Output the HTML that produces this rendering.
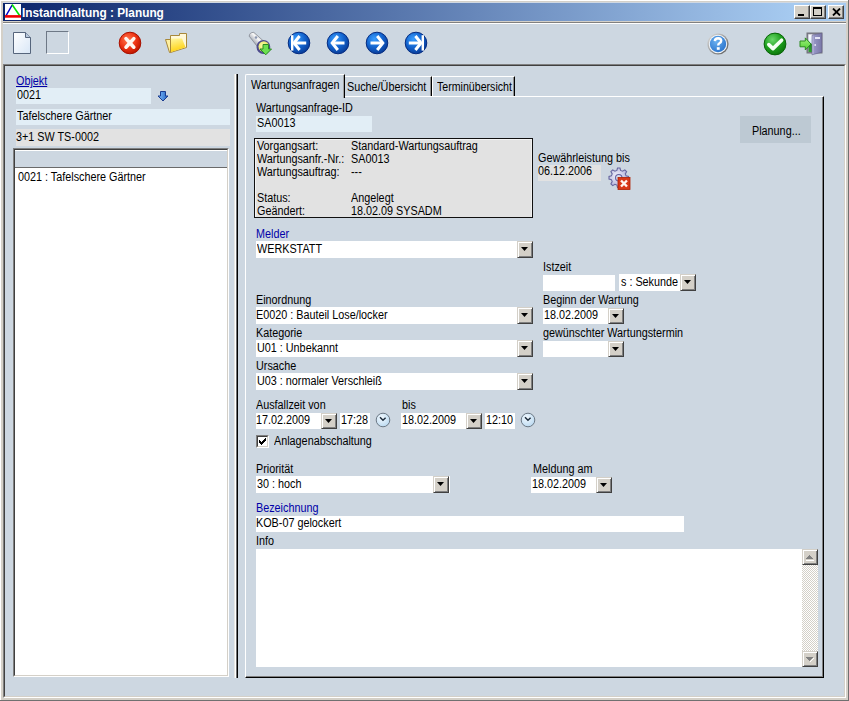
<!DOCTYPE html>
<html><head><meta charset="utf-8">
<style>
*{margin:0;padding:0;box-sizing:border-box}
html,body{width:849px;height:701px;overflow:hidden;background:#D4D0C8}
body{position:relative;font-family:"Liberation Sans",sans-serif;font-size:11px;color:#000}
.a{position:absolute}
.t{position:absolute;white-space:pre;line-height:13px;font-size:12px;transform:scaleX(0.9);transform-origin:0 0}
.bl{color:#0000A8}
.fb{position:absolute;background:#E2EEF6}
.fg{position:absolute;background:#E2E2E2}
.fw{position:absolute;background:#FFFFFF}
.dd{position:absolute;width:16px;background:#D4D0C8;border-top:1px solid #D4D0C8;border-left:1px solid #D4D0C8;border-right:1px solid #404040;border-bottom:1px solid #404040;box-shadow:inset 1px 1px 0 #FFF,inset -1px -1px 0 #808080}
.dd:after{content:"";position:absolute;left:3px;top:5px;width:7px;height:4px;background:#000;clip-path:polygon(0 0,100% 0,50% 100%)}
.bg{background:#CDD7E1}
</style></head><body>
<!-- window frame -->
<div class="a" style="left:0;top:0;width:849px;height:1px;background:#FFF"></div>
<div class="a" style="left:0;top:0;width:1px;height:701px;background:#FFF"></div>
<div class="a" style="left:3px;top:2px;width:843px;height:1px;background:#D0D8E2"></div>
<div class="a" style="left:848px;top:0;width:1px;height:701px;background:#707070"></div>
<div class="a" style="left:0;top:700px;width:849px;height:1px;background:#707070"></div>
<!-- title bar -->
<div class="a" style="left:3px;top:3px;width:843px;height:18px;background:linear-gradient(to right,#0A246A 0px,#A6CAF0 790px)"></div>
<svg class="a" style="left:5px;top:4px" width="16" height="16" viewBox="0 0 16 16">
<rect x="0" y="0" width="16" height="16" fill="#fff"/>
<path d="M0.3 13 L7.2 1" stroke="#0000C8" stroke-width="1.5"/>
<path d="M7 0.5 L14.6 11.5" stroke="#00E000" stroke-width="1.6"/>
<path d="M0 12.4 H16" stroke="#F00000" stroke-width="2.6"/>
</svg>
<div class="t" style="left:22px;top:7px;color:#fff;font-weight:bold;font-size:12px;transform:scaleX(0.985)">Instandhaltung : Planung</div>
<!-- caption buttons -->
<div class="a" style="left:794px;top:5px;width:16px;height:14px;background:#D4D0C8;border-top:1px solid #FFF;border-left:1px solid #FFF;border-right:1px solid #404040;border-bottom:1px solid #404040;box-shadow:inset -1px -1px 0 #808080"><div class="a" style="left:3px;top:8px;width:6px;height:2px;background:#000"></div></div>
<div class="a" style="left:810px;top:5px;width:16px;height:14px;background:#D4D0C8;border-top:1px solid #FFF;border-left:1px solid #FFF;border-right:1px solid #404040;border-bottom:1px solid #404040;box-shadow:inset -1px -1px 0 #808080"><div class="a" style="left:2px;top:1px;width:9px;height:9px;border:1px solid #000;border-top-width:2px"></div></div>
<div class="a" style="left:828px;top:5px;width:16px;height:14px;background:#D4D0C8;border-top:1px solid #FFF;border-left:1px solid #FFF;border-right:1px solid #404040;border-bottom:1px solid #404040;box-shadow:inset -1px -1px 0 #808080">
<svg class="a" style="left:3px;top:2px" width="9" height="8" viewBox="0 0 9 8"><path d="M1 0.5 L8 7.5 M8 0.5 L1 7.5" stroke="#000" stroke-width="1.8"/></svg></div>
<!-- menu separator -->
<div class="a" style="left:3px;top:22px;width:843px;height:1px;background:#808080"></div>
<div class="a" style="left:3px;top:23px;width:843px;height:1px;background:#FFF"></div>
<!-- toolbar -->
<div class="a bg" style="left:3px;top:24px;width:843px;height:40px"></div>
<!-- client -->
<div class="a bg" style="left:3px;top:64px;width:843px;height:634px;border-top:1px solid #808080;border-left:1px solid #808080;border-right:1px solid #FFF;border-bottom:1px solid #FFF"></div>
<div class="a" style="left:4px;top:65px;width:841px;height:632px;border-top:1px solid #404040;border-left:1px solid #404040;border-right:1px solid #D4D0C8;border-bottom:1px solid #D4D0C8"></div>

<!-- LEFT PANEL -->
<div class="t bl" style="left:16px;top:75px;text-decoration:underline">Objekt</div>
<div class="fb" style="left:16px;top:88px;width:135px;height:16px"></div>
<div class="t" style="left:17px;top:89px">0021</div>
<div class="fb" style="left:16px;top:109px;width:214px;height:16px"></div>
<div class="t" style="left:17px;top:110px">Tafelschere Gärtner</div>
<div class="fg" style="left:16px;top:129px;width:214px;height:17px"></div>
<div class="t" style="left:16px;top:131px">3+1 SW TS-0002</div>
<div class="a" style="left:13px;top:148px;width:216px;height:529px;background:#fff;border-top:1px solid #808080;border-left:1px solid #808080;border-right:1px solid #FFF;border-bottom:1px solid #FFF"></div>
<div class="a" style="left:14px;top:149px;width:214px;height:527px;border-top:1px solid #404040;border-left:1px solid #404040;border-right:1px solid #D4D0C8;border-bottom:1px solid #D4D0C8"></div>
<div class="a bg" style="left:15px;top:150px;width:212px;height:18px;border-top:1px solid #FFF;border-bottom:1px solid #6A6A6A"></div>
<div class="t" style="left:18px;top:171px">0021 : Tafelschere Gärtner</div>

<!-- splitter -->
<div class="a" style="left:234px;top:74px;width:1px;height:604px;background:#E8E8E4"></div>
<div class="a" style="left:235px;top:74px;width:1px;height:604px;background:#FFF"></div>
<div class="a" style="left:236px;top:74px;width:1px;height:604px;background:#707070"></div>
<div class="a" style="left:237px;top:74px;width:1px;height:604px;background:#000"></div>
<!-- TABS -->
<div class="a" style="left:245px;top:96px;width:579px;height:582px;border-top:1px solid #FFF;border-left:1px solid #FFF;border-right:1px solid #000;border-bottom:1px solid #000"></div>
<div class="a" style="left:246px;top:97px;width:577px;height:580px;border-right:1px solid #808080;border-bottom:1px solid #808080"></div>
<!-- tab 2 -->
<div class="a bg" style="left:345px;top:76px;width:87px;height:20px;border-top:1px solid #FFF;border-right:1px solid #000;box-shadow:inset -1px 0 0 #909090"></div>
<div class="t" style="left:347px;top:81px">Suche/Übersicht</div>
<!-- tab 3 -->
<div class="a bg" style="left:432px;top:76px;width:83px;height:20px;border-top:1px solid #FFF;border-left:1px solid #FFF;border-right:1px solid #000;box-shadow:inset -1px 0 0 #909090"></div>
<div class="t" style="left:437px;top:81px;transform:scaleX(0.885)">Terminübersicht</div>
<!-- tab 1 selected -->
<div class="a bg" style="left:245px;top:74px;width:100px;height:24px;border-top:1px solid #FFF;border-left:1px solid #FFF;border-right:1px solid #000;border-top-left-radius:2px;box-shadow:inset -1px 0 0 #A0A0A0"></div>
<div class="t" style="left:251px;top:79px">Wartungsanfragen</div>

<!-- TAB CONTENT -->
<div class="t" style="left:256px;top:102px">Wartungsanfrage-ID</div>
<div class="fb" style="left:256px;top:116px;width:116px;height:16px"></div>
<div class="t" style="left:257px;top:117px">SA0013</div>

<div class="fg" style="left:254px;top:138px;width:279px;height:80px;border:1px solid #101010;box-shadow:inset 1px 1px 0 #F4F4F4,inset -1px 0 0 #F0F0F0"></div>
<div class="t" style="left:257px;top:140px;line-height:13px">Vorgangsart:
Wartungsanfr.-Nr.:
Wartungsauftrag:

Status:
Geändert:</div>
<div class="t" style="left:351px;top:140px;line-height:13px">Standard-Wartungsauftrag
SA0013
---

Angelegt
18.02.09 SYSADM</div>

<div class="a" style="left:740px;top:116px;width:71px;height:27px;background:#BDC9D3"></div>
<div class="t" style="left:752px;top:125px">Planung...</div>

<div class="t" style="left:538px;top:152px">Gewährleistung bis</div>
<div class="fg" style="left:538px;top:165px;width:63px;height:16px"></div>
<div class="t" style="left:538px;top:165px">06.12.2006</div>

<div class="t bl" style="left:256px;top:228px">Melder</div>
<div class="fw" style="left:256px;top:241px;width:277px;height:17px"></div>
<div class="t" style="left:257px;top:243px">WERKSTATT</div>
<div class="dd" style="left:517px;top:241px;height:17px"></div>

<div class="t" style="left:543px;top:261px">Istzeit</div>
<div class="fw" style="left:543px;top:275px;width:72px;height:16px"></div>
<div class="fw" style="left:619px;top:274px;width:77px;height:17px"></div>
<div class="t" style="left:621px;top:276px">s : Sekunde</div>
<div class="dd" style="left:680px;top:274px;height:17px"></div>

<div class="t" style="left:256px;top:294px">Einordnung</div>
<div class="fw" style="left:256px;top:307px;width:277px;height:17px"></div>
<div class="t" style="left:256px;top:309px">E0020 : Bauteil Lose/locker</div>
<div class="dd" style="left:517px;top:307px;height:17px"></div>

<div class="t" style="left:543px;top:294px">Beginn der Wartung</div>
<div class="fw" style="left:543px;top:308px;width:81px;height:16px"></div>
<div class="t" style="left:544px;top:309px">18.02.2009</div>
<div class="dd" style="left:608px;top:308px;height:16px"></div>

<div class="t" style="left:256px;top:327px">Kategorie</div>
<div class="fw" style="left:256px;top:340px;width:277px;height:17px"></div>
<div class="t" style="left:257px;top:342px">U01 : Unbekannt</div>
<div class="dd" style="left:517px;top:340px;height:17px"></div>

<div class="t" style="left:543px;top:327px">gewünschter Wartungstermin</div>
<div class="fw" style="left:543px;top:341px;width:81px;height:16px"></div>
<div class="dd" style="left:608px;top:341px;height:16px"></div>

<div class="t" style="left:256px;top:360px">Ursache</div>
<div class="fw" style="left:256px;top:373px;width:277px;height:17px"></div>
<div class="t" style="left:257px;top:375px">U03 : normaler Verschleiß</div>
<div class="dd" style="left:517px;top:373px;height:17px"></div>

<div class="t" style="left:256px;top:399px">Ausfallzeit von</div>
<div class="fw" style="left:256px;top:413px;width:81px;height:16px"></div>
<div class="t" style="left:256px;top:414px">17.02.2009</div>
<div class="dd" style="left:321px;top:413px;height:16px"></div>
<div class="fw" style="left:340px;top:413px;width:30px;height:16px"></div>
<div class="t" style="left:341px;top:414px">17:28</div>

<div class="t" style="left:402px;top:399px">bis</div>
<div class="fw" style="left:401px;top:413px;width:81px;height:16px"></div>
<div class="t" style="left:402px;top:414px">18.02.2009</div>
<div class="dd" style="left:466px;top:413px;height:16px"></div>
<div class="fw" style="left:485px;top:413px;width:30px;height:16px"></div>
<div class="t" style="left:486px;top:414px">12:10</div>

<div class="a" style="left:256px;top:435px;width:13px;height:13px;background:#fff;border-top:1px solid #808080;border-left:1px solid #808080;border-right:1px solid #fff;border-bottom:1px solid #fff"></div>
<div class="a" style="left:257px;top:436px;width:11px;height:11px;border-top:1px solid #404040;border-left:1px solid #404040;border-right:1px solid #D4D0C8;border-bottom:1px solid #D4D0C8"></div>
<svg class="a" style="left:259px;top:438px" width="7" height="7" viewBox="0 0 7 7" shape-rendering="crispEdges"><path d="M6 0h1v1h-1zM5 1h2v1h-2zM0 2h1v1h-1zM4 2h3v1h-3zM0 3h2v1h-2zM3 3h3v1h-3zM0 4h5v1h-5zM1 5h3v1h-3zM2 6h1v1h-1z" fill="#000"/></svg>
<div class="t" style="left:274px;top:435px">Anlagenabschaltung</div>

<div class="t" style="left:256px;top:463px">Priorität</div>
<div class="fw" style="left:256px;top:476px;width:194px;height:17px"></div>
<div class="t" style="left:257px;top:478px">30 : hoch</div>
<div class="dd" style="left:433px;top:476px;height:17px"></div>

<div class="t" style="left:533px;top:463px">Meldung am</div>
<div class="fw" style="left:531px;top:477px;width:81px;height:16px"></div>
<div class="t" style="left:532px;top:478px">18.02.2009</div>
<div class="dd" style="left:596px;top:477px;height:16px"></div>

<div class="t bl" style="left:256px;top:502px">Bezeichnung</div>
<div class="fw" style="left:256px;top:516px;width:428px;height:16px"></div>
<div class="t" style="left:256px;top:517px">KOB-07 gelockert</div>

<div class="t" style="left:256px;top:535px">Info</div>
<div class="fw" style="left:256px;top:549px;width:562px;height:118px"></div>
<!-- scrollbar -->
<div class="a" style="left:802px;top:565px;width:16px;height:86px;background-color:#fff;background-image:repeating-conic-gradient(#D4D0C8 0 25%,#fff 0 50%);background-size:2px 2px"></div>
<div class="a" style="left:802px;top:549px;width:16px;height:16px;background:#D4D0C8;border-top:1px solid #D4D0C8;border-left:1px solid #D4D0C8;border-right:1px solid #404040;border-bottom:1px solid #404040;box-shadow:inset 1px 1px 0 #FFF,inset -1px -1px 0 #808080"></div>
<div class="a" style="left:802px;top:651px;width:16px;height:16px;background:#D4D0C8;border-top:1px solid #D4D0C8;border-left:1px solid #D4D0C8;border-right:1px solid #404040;border-bottom:1px solid #404040;box-shadow:inset 1px 1px 0 #FFF,inset -1px -1px 0 #808080"></div>

<!-- TOOLBAR ICONS -->
<svg class="a" style="left:12px;top:31px" width="20" height="24" viewBox="0 0 20 24">
<defs><linearGradient id="gdoc" x1="0" y1="0" x2="1" y2="1"><stop offset="0" stop-color="#FFFFFF"/><stop offset="1" stop-color="#D8E6F6"/></linearGradient></defs>
<path d="M1.5 1.5 H13.5 L18.5 6.5 V22.5 H1.5 Z" fill="url(#gdoc)" stroke="#56657C" stroke-width="1"/>
<path d="M13.5 1.5 V6.5 H18.5" fill="#B8C8DC" stroke="#56657C" stroke-width="1"/>
</svg>
<div class="a" style="left:46px;top:31px;width:23px;height:23px;border-top:1px solid #6E7886;border-left:1px solid #6E7886;border-right:1px solid #FFF;border-bottom:1px solid #FFF"></div>

<svg class="a" style="left:118px;top:31px" width="24" height="24" viewBox="0 0 24 24">
<defs><radialGradient id="gred" cx="0.4" cy="0.35" r="0.65"><stop offset="0" stop-color="#FF7A50"/><stop offset="0.6" stop-color="#EE3414"/><stop offset="1" stop-color="#C01800"/></radialGradient></defs>
<circle cx="12" cy="12" r="10.8" fill="url(#gred)" stroke="#A81000" stroke-width="1"/>
<path d="M8 16.2 L15.8 7.6 M8 7.6 L15.8 16.2" stroke="#FFF6F0" stroke-width="3.6" stroke-linecap="round"/>
</svg>

<svg class="a" style="left:163px;top:31px" width="26" height="24" viewBox="0 0 26 24">
<defs><linearGradient id="gfold" x1="0" y1="0" x2="0.3" y2="1"><stop offset="0" stop-color="#FFF6A0"/><stop offset="1" stop-color="#FFD210"/></linearGradient></defs>
<path d="M7.5 4.5 H16.5 V2.5 H23.5 V16.5 L7.5 21.5 Z" fill="#FFF8D8" stroke="#A8883A" stroke-width="1"/>
<path d="M8 7.5 H19 L22.5 16.2 L8 21 Z" fill="url(#gfold)"/>
<path d="M2.5 8.5 H7.5 V21.5 H6.5 Z" fill="#FFF0A0" stroke="#A8883A" stroke-width="1" stroke-linejoin="round"/>
</svg>

<svg class="a" style="left:248px;top:31px" width="26" height="26" viewBox="0 0 26 26">
<defs><linearGradient id="gflash" x1="0.15" y1="0.85" x2="0.85" y2="0.15"><stop offset="0" stop-color="#5C6068"/><stop offset="0.35" stop-color="#B8BCC4"/><stop offset="0.6" stop-color="#F8F8F8"/><stop offset="1" stop-color="#9EA2AA"/></linearGradient>
<radialGradient id="glens" cx="0.4" cy="0.4" r="0.7"><stop offset="0" stop-color="#FFFFA8"/><stop offset="1" stop-color="#D8D850"/></radialGradient></defs>
<path d="M1.2 5.2 Q1.5 1.2 5.8 1.4 L18.6 12.8 L12.4 19.4 Z" fill="url(#gflash)" stroke="#7A7E88" stroke-width="0.7"/>
<circle cx="8" cy="6.5" r="1.3" fill="#8A96B0"/>
<circle cx="15.4" cy="16" r="6.9" fill="#4C4A8C"/>
<circle cx="15.8" cy="15.6" r="5.3" fill="url(#glens)"/>
<path d="M15 13.5 H20.5 V18 H23.5 L17.75 23.8 L12 18 H15 Z" fill="#6CE050" stroke="#2A8A22" stroke-width="1"/>
</svg>

<svg class="a" style="left:287px;top:31px" width="24" height="24" viewBox="0 0 24 24">
<defs><radialGradient id="gblue" cx="0.38" cy="0.32" r="0.72"><stop offset="0" stop-color="#3A9EFF"/><stop offset="0.55" stop-color="#1262CC"/><stop offset="1" stop-color="#083A96"/></radialGradient></defs>
<circle cx="12" cy="12" r="10.8" fill="url(#gblue)" stroke="#062C80" stroke-width="1"/>
<path d="M5.2 4.2 V19.6" stroke="#fff" stroke-width="2.4"/>
<path d="M8 12 H19.2" stroke="#fff" stroke-width="3"/>
<path d="M12.6 5 L7 12 L12.6 19" fill="none" stroke="#fff" stroke-width="3"/>
</svg>
<svg class="a" style="left:326px;top:31px" width="24" height="24" viewBox="0 0 24 24">
<circle cx="12" cy="12" r="10.8" fill="url(#gblue)" stroke="#062C80" stroke-width="1"/>
<path d="M7 12 H18.5" stroke="#fff" stroke-width="3"/>
<path d="M11.8 5 L6.2 12 L11.8 19" fill="none" stroke="#fff" stroke-width="3"/>
</svg>
<svg class="a" style="left:365px;top:31px" width="24" height="24" viewBox="0 0 24 24">
<circle cx="12" cy="12" r="10.8" fill="url(#gblue)" stroke="#062C80" stroke-width="1"/>
<path d="M5.5 12 H17" stroke="#fff" stroke-width="3"/>
<path d="M12.2 5 L17.8 12 L12.2 19" fill="none" stroke="#fff" stroke-width="3"/>
</svg>
<svg class="a" style="left:404px;top:31px" width="24" height="24" viewBox="0 0 24 24">
<circle cx="12" cy="12" r="10.8" fill="url(#gblue)" stroke="#062C80" stroke-width="1"/>
<path d="M18.8 4.2 V19.6" stroke="#fff" stroke-width="2.4"/>
<path d="M4.8 12 H16" stroke="#fff" stroke-width="3"/>
<path d="M11.4 5 L17 12 L11.4 19" fill="none" stroke="#fff" stroke-width="3"/>
</svg>

<svg class="a" style="left:706px;top:32px" width="24" height="24" viewBox="0 0 24 24">
<defs><linearGradient id="gring" x1="0" y1="0" x2="1" y2="1"><stop offset="0" stop-color="#E4E4E4"/><stop offset="1" stop-color="#545454"/></linearGradient>
<radialGradient id="ghelp" cx="0.4" cy="0.35" r="0.7"><stop offset="0" stop-color="#6AB0F0"/><stop offset="1" stop-color="#2A74CC"/></radialGradient></defs>
<circle cx="12" cy="12" r="10.6" fill="url(#gring)"/>
<circle cx="12" cy="12" r="9.2" fill="#F4F8FC"/>
<circle cx="12" cy="12" r="8.2" fill="url(#ghelp)"/>
<path d="M8.8 9.2 Q9 6.2 12.2 6.2 Q15.2 6.3 15.2 8.8 Q15.2 10.4 13.4 11.3 Q12.2 11.9 12.2 13.6" fill="none" stroke="#fff" stroke-width="2.4"/>
<rect x="10.8" y="15.2" width="2.9" height="2.6" fill="#fff"/>
</svg>

<svg class="a" style="left:763px;top:32px" width="24" height="24" viewBox="0 0 24 24">
<defs><radialGradient id="ggreen" cx="0.38" cy="0.3" r="0.75"><stop offset="0" stop-color="#6AD86A"/><stop offset="0.55" stop-color="#1EA01E"/><stop offset="1" stop-color="#0A740A"/></radialGradient></defs>
<circle cx="12" cy="12" r="10.9" fill="url(#ggreen)" stroke="#086408" stroke-width="1"/>
<path d="M5.8 12.6 L10 16.6 L18.6 8.2" fill="none" stroke="#F4FFF4" stroke-width="3.6" stroke-linejoin="round" stroke-linecap="round"/>
</svg>

<svg class="a" style="left:796px;top:29px" width="30" height="29" viewBox="0 0 30 29">
<defs><linearGradient id="gdoor" x1="0" y1="0" x2="1" y2="0"><stop offset="0" stop-color="#C8C8E8"/><stop offset="0.25" stop-color="#9494C4"/><stop offset="1" stop-color="#7A78A8"/></linearGradient>
<linearGradient id="gopen" x1="0" y1="0" x2="0" y2="1"><stop offset="0" stop-color="#FFFFFF"/><stop offset="0.5" stop-color="#D8ECFF"/><stop offset="0.55" stop-color="#208A20"/><stop offset="1" stop-color="#30A030"/></linearGradient>
<linearGradient id="garr" x1="0" y1="0" x2="0" y2="1"><stop offset="0" stop-color="#A0F080"/><stop offset="1" stop-color="#50D030"/></linearGradient></defs>
<rect x="11.2" y="4.2" width="14.6" height="19.6" fill="#A8A8B8" stroke="#74747E" stroke-width="1.4"/>
<rect x="12.5" y="5.5" width="4" height="17.5" fill="url(#gopen)"/>
<path d="M16 6.2 L25.8 4.2 V23.2 L16 25.8 Z" fill="url(#gdoor)" stroke="#64628E" stroke-width="0.6"/>
<rect x="19" y="8" width="5" height="2" fill="#E4E4F6"/>
<circle cx="19.2" cy="16" r="0.9" fill="#E8E8F8"/>
<path d="M4 12 H9.3 V8.9 L15 15 L9.3 21 V17.8 H4 Z" fill="url(#garr)" stroke="#2A8A1E" stroke-width="1"/>
</svg>

<!-- left panel arrow -->
<svg class="a" style="left:157px;top:90px" width="12" height="12" viewBox="0 0 12 12">
<defs><linearGradient id="gdn" x1="0" y1="0" x2="1" y2="0"><stop offset="0" stop-color="#80C0FF"/><stop offset="1" stop-color="#2060C0"/></linearGradient></defs>
<path d="M3.5 1.5 H8.5 V6 H11 L6 11 L1 6 H3.5 Z" fill="url(#gdn)" stroke="#1A3C90" stroke-width="1"/>
</svg>

<!-- gear with red x -->
<svg class="a" style="left:606px;top:166px" width="26" height="26" viewBox="0 0 26 26">
<defs><radialGradient id="ggear" cx="0.4" cy="0.4" r="0.7"><stop offset="0" stop-color="#F0F0FC"/><stop offset="1" stop-color="#A4A4D0"/></radialGradient></defs>
<path d="M11.5 2 L14 2 L14.6 4.4 L16.6 5.2 L18.8 3.9 L20.6 5.7 L19.3 7.9 L20.1 9.9 L22.5 10.5 L22.5 13 L20.1 13.6 L19.3 15.6 L20.6 17.8 L18.8 19.6 L16.6 18.3 L14.6 19.1 L14 21.5 L11.5 21.5 L10.9 19.1 L8.9 18.3 L6.7 19.6 L4.9 17.8 L6.2 15.6 L5.4 13.6 L3 13 L3 10.5 L5.4 9.9 L6.2 7.9 L4.9 5.7 L6.7 3.9 L8.9 5.2 L10.9 4.4 Z" fill="url(#ggear)" stroke="#6666A0" stroke-width="1.1"/>
<circle cx="12.75" cy="11.75" r="3.2" fill="#D8DCEC" stroke="#6060A0" stroke-width="1.1"/>
<rect x="12" y="11.5" width="12" height="12" fill="#D83818" stroke="#B02000" stroke-width="0.8"/>
<path d="M15 14.5 L21 20.5 M21 14.5 L15 20.5" stroke="#FFF4F0" stroke-width="2.4"/>
</svg>

<!-- clock icons -->
<svg class="a" style="left:375px;top:412px" width="16" height="16" viewBox="0 0 16 16">
<defs><radialGradient id="gclk" cx="0.4" cy="0.35" r="0.7"><stop offset="0" stop-color="#F4FAFF"/><stop offset="1" stop-color="#B8D8F0"/></radialGradient></defs>
<circle cx="8" cy="8" r="6.8" fill="url(#gclk)" stroke="#6C7884" stroke-width="1"/>
<path d="M5 5.2 L8 8.2 L10.6 5.8" fill="none" stroke="#1C2C3C" stroke-width="1.5"/>
</svg>
<svg class="a" style="left:520px;top:412px" width="16" height="16" viewBox="0 0 16 16">
<circle cx="8" cy="8" r="6.8" fill="url(#gclk)" stroke="#6C7884" stroke-width="1"/>
<path d="M5 5.2 L8 8.2 L10.6 5.8" fill="none" stroke="#1C2C3C" stroke-width="1.5"/>
</svg>

<!-- scrollbar arrows -->
<svg class="a" style="left:802px;top:549px" width="16" height="16" viewBox="0 0 16 16" shape-rendering="crispEdges">
<path d="M4 11h8v1h-8z" fill="#fff"/>
<path d="M7 6h1v1h-1zM6 7h3v1h-3zM5 8h5v1h-5zM4 9h7v1h-7z" fill="#808080"/>
</svg>
<svg class="a" style="left:802px;top:651px" width="16" height="16" viewBox="0 0 16 16" shape-rendering="crispEdges">
<path d="M11 7h1v1h-1zM10 8h1v1h-1zM9 9h1v1h-1zM8 10h1v1h-1z" fill="#fff"/>
<path d="M4 6h7v1h-7zM5 7h5v1h-5zM6 8h3v1h-3zM7 9h1v1h-1z" fill="#808080"/>
</svg>
</body></html>
